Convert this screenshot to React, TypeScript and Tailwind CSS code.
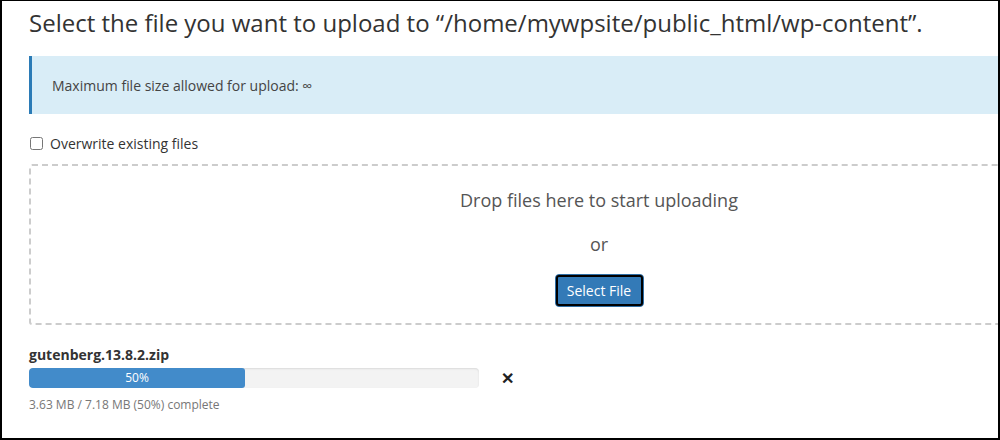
import * as React from "react";

export default function App() {
  const percent = 50;

  return (
    <div
      className="w-[1000px] h-[440px] overflow-hidden bg-white border-t border-l-2 border-r-2 border-b-2 border-black"
      style={{ fontFamily: '"Open Sans", "Liberation Sans", sans-serif' }}
    >
      <div className="w-[1200px] pl-[27px] pt-[5px] text-[#333]">
        <h1 className="text-[24px] leading-[34px] font-normal">
          Select the file you want to upload to “/home/mywpsite/public_html/wp-content”.
        </h1>

        <div className="mt-[16px] w-[1140px] h-[58px] flex items-center bg-[#d9edf7] border-l-[3px] border-[#2b7bb6] pl-[20px] text-[14px] text-[#444]">
          Maximum file size allowed for upload: ∞
        </div>

        <label className="mt-[19px] flex items-center gap-[7px] text-[14px] text-[#333]">
          <input type="checkbox" className="w-[13px] h-[13px] ml-[1px]" />
          Overwrite existing files
        </label>

        <div className="mt-[10px] w-[1140px] h-[161px] border-2 border-dashed border-[#ccc] rounded-[3px] flex flex-col items-center">
          <div className="mt-[21px] text-[18px] text-[#555] leading-[26px]">
            Drop files here to start uploading
          </div>
          <div className="mt-[18px] text-[18px] text-[#555] leading-[26px]">or</div>
          <button className="mt-[17px] w-[89px] h-[33px] rounded-[4px] border border-[#2e6da4] bg-[#337ab7] text-white text-[14px] outline-2 outline-black -outline-offset-[3px]">
            Select File
          </button>
        </div>

        <div className="mt-[20px] text-[14px] font-bold text-[#333] leading-[20px]">
          gutenberg.13.8.2.zip
        </div>
        <div className="mt-[3px] flex items-center">
          <div className="w-[450px] h-[20px] rounded-[4px] bg-[#f3f3f3] shadow-[inset_0_1px_2px_rgba(0,0,0,0.1)] overflow-hidden flex">
            <div
              className="h-full bg-[#428bca] text-white text-[12px] leading-[20px] text-center rounded-[3px]"
              style={{ width: `${percent * 4.32}px` }}
            >
              {percent}%
            </div>
          </div>
          <span className="ml-[22px] text-[16px] font-bold text-[#222] leading-[20px]">✕</span>
        </div>
        <div className="mt-[9px] text-[12px] text-[#777] leading-[16px]">
          3.63 MB / 7.18 MB (50%) complete
        </div>
      </div>
    </div>
  );
}
